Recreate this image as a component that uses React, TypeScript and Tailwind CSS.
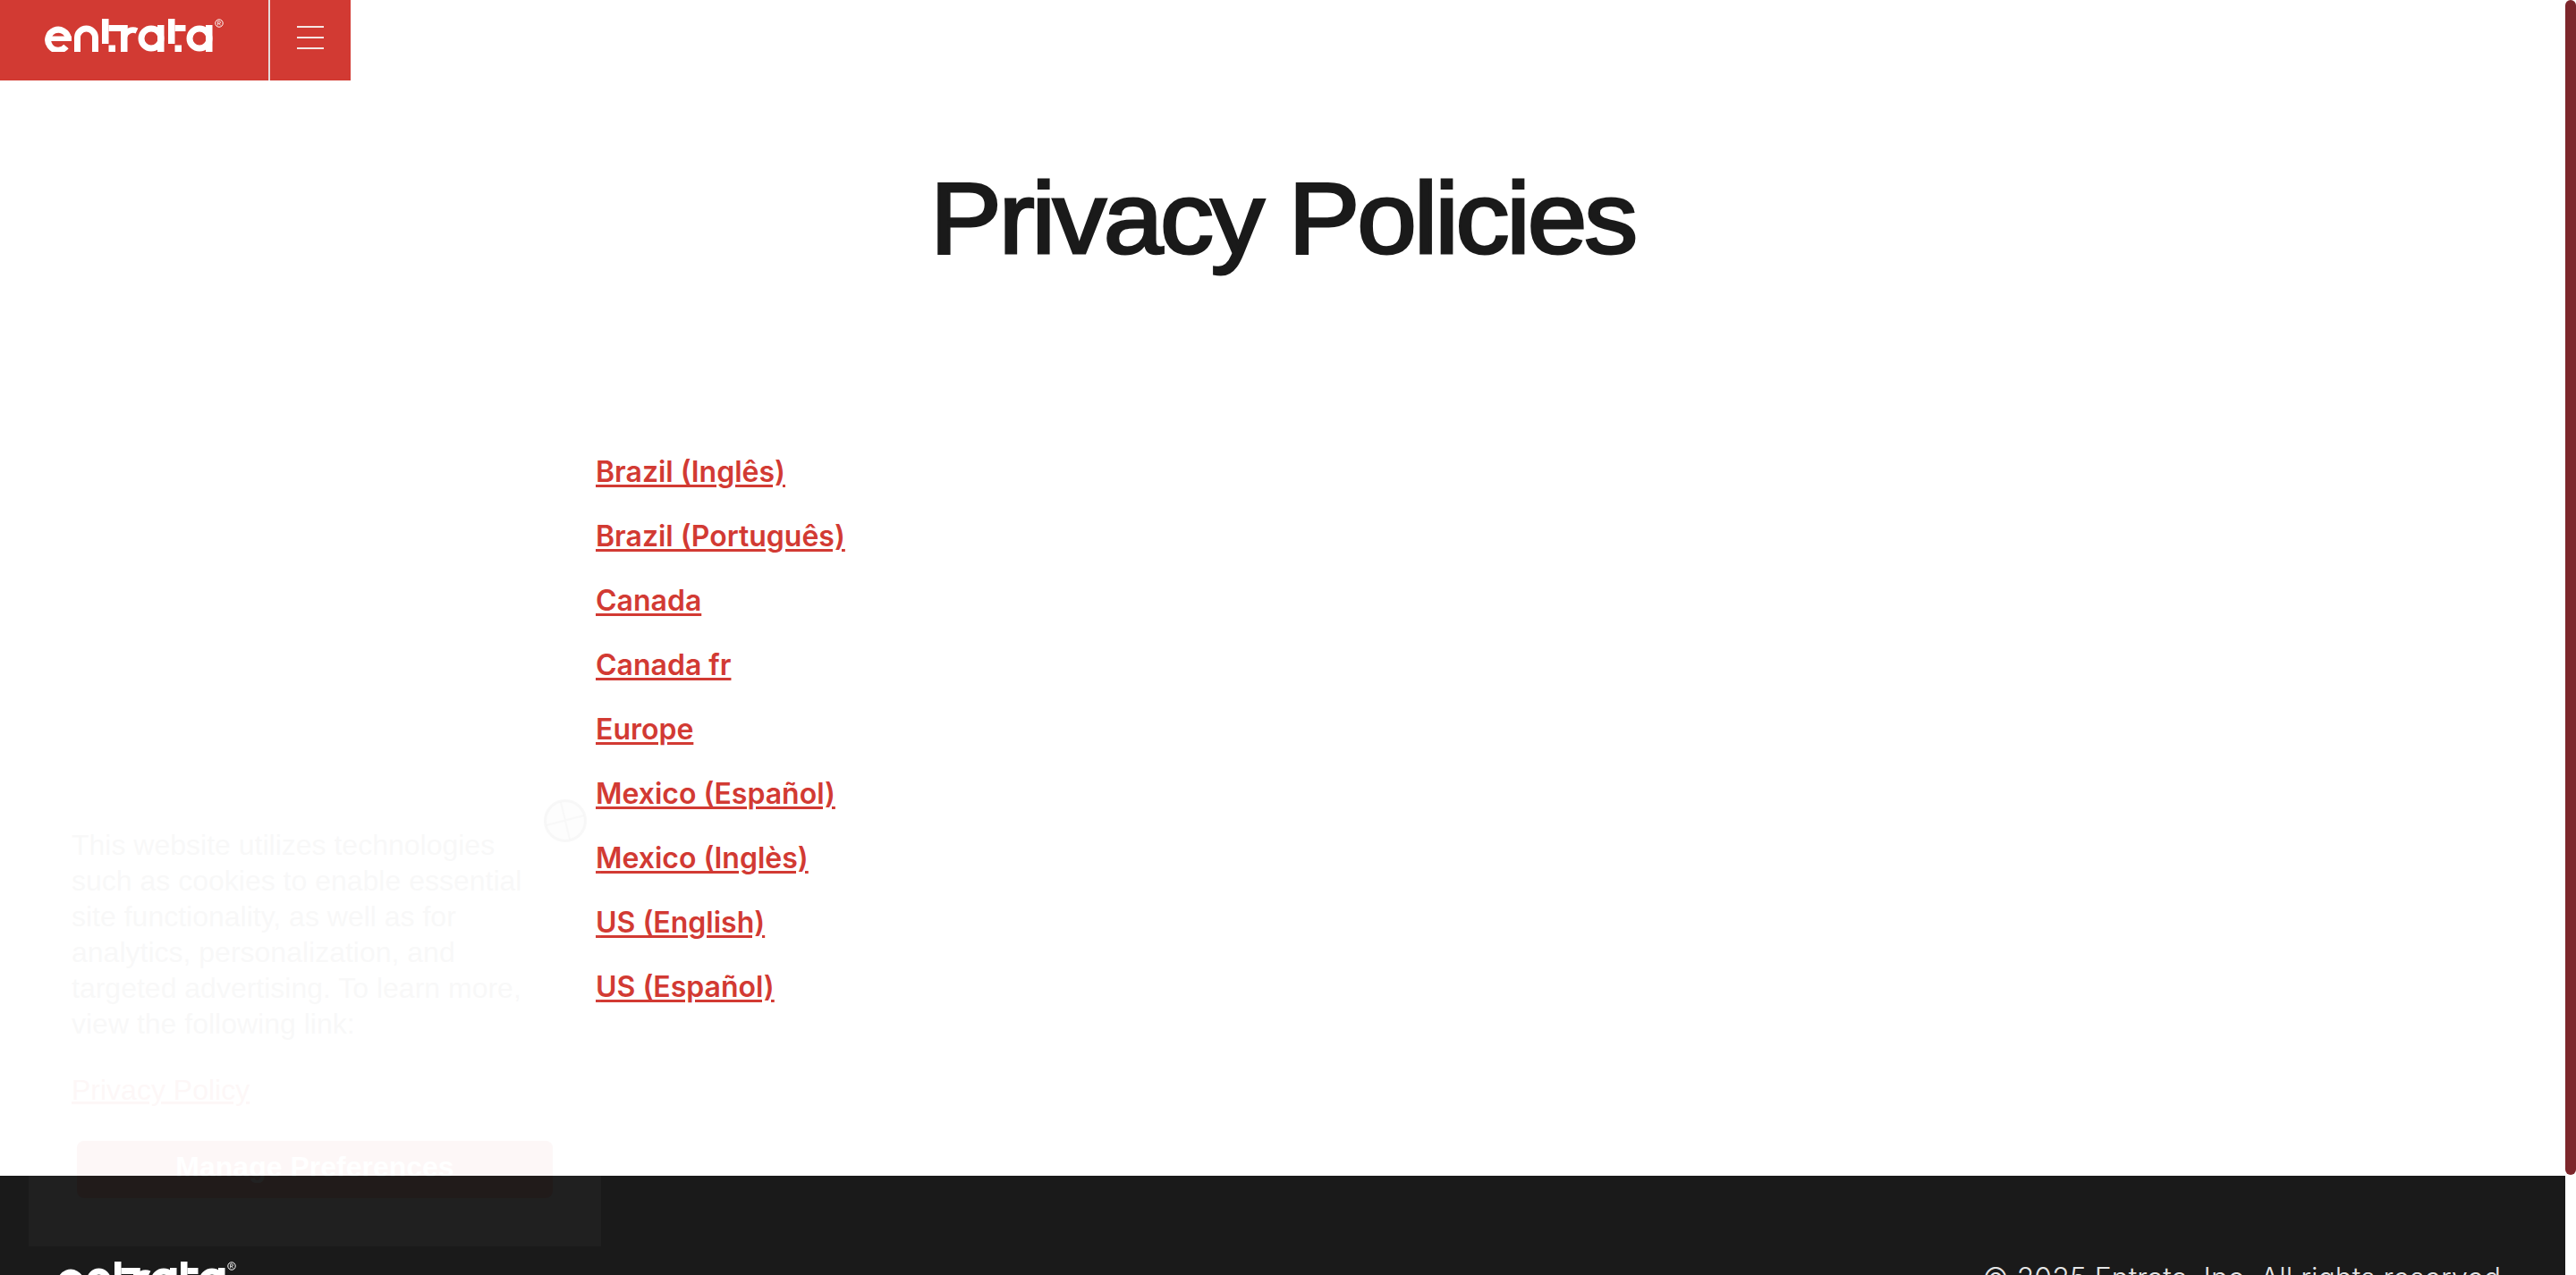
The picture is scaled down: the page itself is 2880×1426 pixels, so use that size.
const links = [
  'Brazil (Inglês)',
  'Brazil (Português)',
  'Canada',
  'Canada fr',
  'Europe',
  'Mexico (Español)',
  'Mexico (Inglès)',
  'US (English)',
  'US (Español)',
]

function Logo({ className }: { className?: string }) {
  return (
    <svg viewBox="0 0 200 37" className={className} fill="none">
      <path d="M26.5 22A11.5 11.5 0 1 0 24 31" stroke="white" strokeWidth="7" />
      <rect x="3" y="19.5" width="27" height="5.5" fill="white" />
      <path d="M36.5 37V21a10 10 0 0 1 20 0v16" stroke="white" strokeWidth="7" />
      <rect x="64" y="0" width="7.5" height="28" fill="white" />
      <rect x="71.5" y="7" width="21" height="7" fill="white" />
      <rect x="71.5" y="29.5" width="7.5" height="7.5" fill="white" />
      <rect x="85" y="7" width="7.5" height="30" fill="white" />
      <path d="M89 20a10 10 0 0 1 14-6.5" stroke="white" strokeWidth="6.5" />
      <circle cx="119" cy="22" r="11" stroke="white" strokeWidth="7" />
      <rect x="126" y="7" width="7.5" height="30" fill="white" />
      <rect x="138" y="0" width="7.5" height="28" fill="white" />
      <rect x="145.5" y="7" width="12" height="7" fill="white" />
      <rect x="145.5" y="29.5" width="7.5" height="7.5" fill="white" />
      <circle cx="173" cy="22" r="11" stroke="white" strokeWidth="7" />
      <rect x="180" y="7" width="7.5" height="30" fill="white" />
      <circle cx="195" cy="5" r="4.2" stroke="white" strokeWidth="1" />
      <path d="M193.6 7.4V2.8h1.6a1.2 1.2 0 0 1 0 2.5h-1.6m1.6 0l1.2 2.1" stroke="white" strokeWidth="0.8" />
    </svg>
  )
}

export default function App() {
  return (
    <div className="relative flex h-[1426px] overflow-hidden bg-white font-['Inter',sans-serif]">
      <div className="flex w-[2868px] flex-col">
        <header className="flex h-[90px] w-[392px] shrink-0 items-stretch bg-[#d23a33]">
          <div className="flex w-[300px] items-start pl-[50px] pt-[21px]">
            <Logo className="h-[37px] w-[200px]" />
          </div>
          <div className="w-[2px] bg-[#e6dada]" />
          <div className="flex flex-1 flex-col items-center gap-[10px] pt-[29px]">
            <span className="h-[2px] w-[30px] bg-[#f5e6e4]" />
            <span className="h-[2px] w-[30px] bg-[#f5e6e4]" />
            <span className="h-[2px] w-[30px] bg-[#f5e6e4]" />
          </div>
        </header>

        <main className="h-[1225px] shrink-0">
          <h1 className="mt-[89px] scale-x-[1.06] text-center font-['Liberation_Sans',sans-serif] text-[113px] leading-[130px] tracking-[-3px] text-[#1a1a1a] [-webkit-text-stroke:3px_#1a1a1a]">
            Privacy Policies
          </h1>
          <ul className="ml-[666px] mt-[199px] flex flex-col gap-[32px]">
            {links.map((link) => (
              <li key={link} className="h-[40px] text-[32px] leading-[40px]">
                <a href="#" className="font-semibold text-[#d23a33] underline decoration-[3px] underline-offset-[3px]">
                  {link}
                </a>
              </li>
            ))}
          </ul>
        </main>

        <footer className="flex shrink-0 items-start justify-between bg-[#1a1a1a] pb-10 pl-[64px] pr-[63px] pt-[95px]">
          <Logo className="mt-[1px] h-[37px] w-[200px]" />
          <p className="text-[32px] font-light leading-[40px] text-[#e5e5e5]">© 2025 Entrata, Inc. All rights reserved.</p>
        </footer>
      </div>

      <div className="w-3 bg-white">
        <div className="h-[1314px] rounded-full bg-[#7d262b]" />
      </div>

      {/* cookie banner mid fade-in, so it is almost invisible */}
      <div className="absolute left-[32px] top-[870px] h-[524px] w-[640px] bg-white/70 font-['Liberation_Sans',sans-serif] opacity-[0.035]">
        <button className="absolute right-[16px] top-[24px] h-[48px] w-[48px]">
          <svg viewBox="0 0 48 48" className="h-[48px] w-[48px]" fill="none" stroke="black">
            <circle cx="24" cy="24" r="22.5" fill="black" fillOpacity="0.2" strokeWidth="3" strokeOpacity="0.7" />
            <path d="M19 3l10 42M3 29l42-11" strokeWidth="2" strokeOpacity="0.6" />
          </svg>
        </button>
        <p className="ml-[48px] mt-[55px] w-[530px] text-[32px] leading-[40px] text-[#555]">
          This website utilizes technologies such as cookies to enable essential site functionality, as well as for analytics, personalization, and targeted advertising. To learn more, view the following link:
        </p>
        <a href="#" className="ml-[48px] mt-[34px] block text-[32px] leading-[40px] text-[#d23a33] underline">
          Privacy Policy
        </a>
        <button className="ml-[54px] mt-[37px] block h-[64px] w-[532px] rounded-[8px] bg-[#d23a33] pb-[6px] text-[32px] font-bold text-white">
          Manage Preferences
        </button>
      </div>
    </div>
  )
}
